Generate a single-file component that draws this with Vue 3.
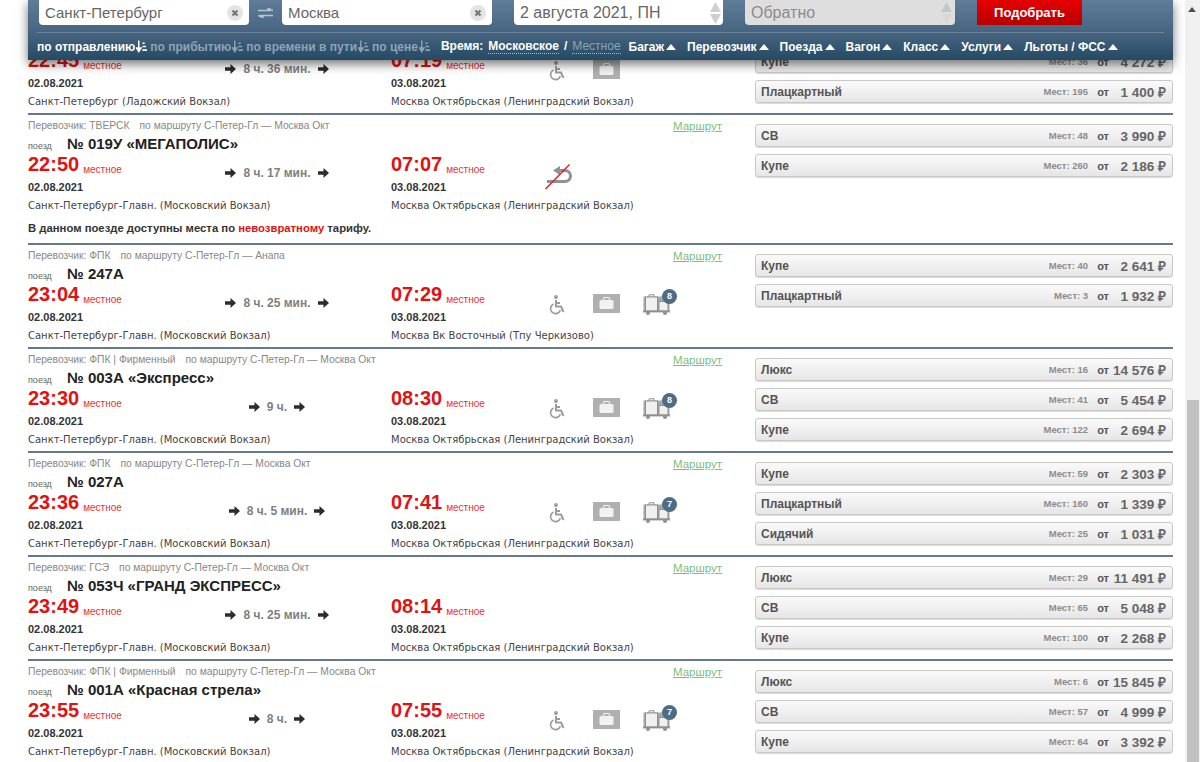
<script setup>
import { ref } from "vue";

const sortItems = [
  { label: "по отправлению", active: true },
  { label: "по прибытию" },
  { label: "по времени в пути" },
  { label: "по цене" },
];

const filters = ["Багаж", "Перевозчик", "Поезда", "Вагон", "Класс", "Услуги", "Льготы / ФСС"];

const SPB_MAIN = "Санкт-Петербург-Главн. (Московский Вокзал)";
const MSK_OKT = "Москва Октябрьская (Ленинградский Вокзал)";

const trains = ref([
  {
    // top of this row is under the search panel
    id: 0,
    duration: "8 ч. 36 мин.",
    depart: "22:45",
    arrive: "07:19",
    from: "Санкт-Петербург (Ладожский Вокзал)",
    to: MSK_OKT,
    wheel: true,
    bag: true,
    tickets: [
      { name: "" },
      { name: "Купе", seats: 36, price: "4 272" },
      { name: "Плацкартный", seats: 195, price: "1 400" },
    ],
  },
  {
    id: 1,
    carrier: "ТВЕРСК",
    route: "С-Петер-Гл — Москва Окт",
    title: "№ 019У «МЕГАПОЛИС»",
    depart: "22:50",
    duration: "8 ч. 17 мин.",
    arrive: "07:07",
    from: SPB_MAIN,
    to: MSK_OKT,
    noReturn: true,
    note: true,
    tickets: [
      { name: "СВ", seats: 48, price: "3 990" },
      { name: "Купе", seats: 260, price: "2 186" },
    ],
  },
  {
    id: 2,
    carrier: "ФПК",
    route: "С-Петер-Гл — Анапа",
    title: "№ 247А",
    depart: "23:04",
    duration: "8 ч. 25 мин.",
    arrive: "07:29",
    from: SPB_MAIN,
    to: "Москва Вк Восточный (Тпу Черкизово)",
    wheel: true,
    bag: true,
    luggage: 8,
    tickets: [
      { name: "Купе", seats: 40, price: "2 641" },
      { name: "Плацкартный", seats: 3, price: "1 932" },
    ],
  },
  {
    id: 3,
    carrier: "ФПК | Фирменный",
    route: "С-Петер-Гл — Москва Окт",
    title: "№ 003А «Экспресс»",
    depart: "23:30",
    duration: "9 ч.",
    arrive: "08:30",
    from: SPB_MAIN,
    to: MSK_OKT,
    wheel: true,
    bag: true,
    luggage: 8,
    tickets: [
      { name: "Люкс", seats: 16, price: "14 576" },
      { name: "СВ", seats: 41, price: "5 454" },
      { name: "Купе", seats: 122, price: "2 694" },
    ],
  },
  {
    id: 4,
    carrier: "ФПК",
    route: "С-Петер-Гл — Москва Окт",
    title: "№ 027А",
    depart: "23:36",
    duration: "8 ч. 5 мин.",
    arrive: "07:41",
    from: SPB_MAIN,
    to: MSK_OKT,
    wheel: true,
    bag: true,
    luggage: 7,
    tickets: [
      { name: "Купе", seats: 59, price: "2 303" },
      { name: "Плацкартный", seats: 160, price: "1 339" },
      { name: "Сидячий", seats: 25, price: "1 031" },
    ],
  },
  {
    id: 5,
    carrier: "ГСЭ",
    route: "С-Петер-Гл — Москва Окт",
    title: "№ 053Ч «ГРАНД ЭКСПРЕСС»",
    depart: "23:49",
    duration: "8 ч. 25 мин.",
    arrive: "08:14",
    from: SPB_MAIN,
    to: MSK_OKT,
    tickets: [
      { name: "Люкс", seats: 29, price: "11 491" },
      { name: "СВ", seats: 65, price: "5 048" },
      { name: "Купе", seats: 100, price: "2 268" },
    ],
  },
  {
    id: 6,
    carrier: "ФПК | Фирменный",
    route: "С-Петер-Гл — Москва Окт",
    title: "№ 001А «Красная стрела»",
    depart: "23:55",
    duration: "8 ч.",
    arrive: "07:55",
    from: SPB_MAIN,
    to: MSK_OKT,
    wheel: true,
    bag: true,
    luggage: 7,
    tickets: [
      { name: "Люкс", seats: 6, price: "15 845" },
      { name: "СВ", seats: 57, price: "4 999" },
      { name: "Купе", seats: 64, price: "3 392" },
    ],
  },
]);
</script>

<template>
  <div class="page">
    <header class="search">
      <div class="search-fields">
        <div class="field city">
          <span>Санкт-Петербург</span>
          <svg width="16" height="16" viewBox="0 0 16 16">
            <circle cx="8" cy="8" r="8" fill="#e4e4e4" />
            <path d="M5.5 5.5l5 5M10.5 5.5l-5 5" stroke="#777" stroke-width="2.2" />
          </svg>
        </div>
        <svg class="swap" width="15" height="10" viewBox="0 0 15 10">
          <path d="M0 2.5H13M15 2.5L10 0.3V2.5M15 7.5H2M0 7.5L5 9.7V7.5" stroke="#b4c4d1" stroke-width="1.4" fill="none" />
        </svg>
        <div class="field city">
          <span>Москва</span>
          <svg width="16" height="16" viewBox="0 0 16 16">
            <circle cx="8" cy="8" r="8" fill="#e4e4e4" />
            <path d="M5.5 5.5l5 5M10.5 5.5l-5 5" stroke="#777" stroke-width="2.2" />
          </svg>
        </div>
        <div class="field date">
          <span>2 августа 2021, ПН</span>
          <svg width="11" height="23" viewBox="0 0 11 23">
            <path d="M5.5 1L11 11H0Z" fill="#cfcfcf" />
            <path d="M5.5 23L0 13H11Z" fill="#cfcfcf" />
          </svg>
        </div>
        <div class="field date back">
          <span>Обратно</span>
          <svg width="11" height="23" viewBox="0 0 11 23">
            <path d="M5.5 1L11 11H0Z" fill="#c6c6c6" />
            <path d="M5.5 23L0 13H11Z" fill="#d8d8d8" />
          </svg>
        </div>
        <button class="submit" type="button">Подобрать</button>
      </div>
      <div class="search-filters">
        <div class="sort">
          <span v-for="item in sortItems" :key="item.label" class="sort-item" :class="{ active: item.active }">
            {{ item.label }}
            <svg width="11" height="13" viewBox="0 0 12 13">
              <path d="M3 0V9M0.5 8L3 12L5.5 8Z" stroke="currentColor" stroke-width="1.6" fill="currentColor" />
              <path d="M7 3H9.5M7 6.5H11M7 10.5H12" stroke="currentColor" stroke-width="1.8" />
            </svg>
          </span>
        </div>
        <div class="time-zone">
          <b>Время:</b>
          <span class="zone on">Московское</span>
          <b>/</b>
          <span class="zone">Местное</span>
        </div>
        <div class="filters">
          <span v-for="name in filters" :key="name" class="filter">{{ name }}<i class="caret"></i></span>
        </div>
      </div>
    </header>

    <main class="list">
      <section v-for="train in trains" :key="train.id" class="train">
        <div class="info">
          <div class="meta">
            <template v-if="train.title">
              <span>Перевозчик: {{ train.carrier }}<em>по маршруту {{ train.route }}</em></span>
              <a class="route-link">Маршрут</a>
            </template>
          </div>
          <div class="title">
            <template v-if="train.title"><small>поезд</small>{{ train.title }}</template>
          </div>
          <div class="schedule">
            <div class="time">{{ train.depart }}<small>местное</small></div>
            <div class="duration">
              <svg width="11" height="10" viewBox="0 0 11 10"><path d="M0 3.2H5.5V0L11 5L5.5 10V6.8H0Z" fill="#2c2c2c" /></svg>
              <span>{{ train.duration }}</span>
              <svg width="11" height="10" viewBox="0 0 11 10"><path d="M0 3.2H5.5V0L11 5L5.5 10V6.8H0Z" fill="#2c2c2c" /></svg>
            </div>
            <div class="time">{{ train.arrive }}<small>местное</small></div>
            <div class="services">
              <svg v-if="train.noReturn" class="no-return" width="28" height="26" viewBox="0 0 28 26">
                <path d="M2 17.5H20A5.5 5.5 0 0 0 20 6.5H13" stroke="#8a939c" stroke-width="3" fill="none" />
                <path d="M8 6.5L15 2V11Z" fill="#8a939c" />
                <path d="M0.5 25L24.5 0.5" stroke="#f01818" stroke-width="1.4" />
              </svg>
              <svg v-if="train.wheel" class="wheel" width="16" height="20" viewBox="0 0 16 20">
                <circle cx="7" cy="2" r="1.9" fill="#9b9b9b" />
                <path d="M7 5V11.5H12L14.5 17M7 8H11" stroke="#9b9b9b" stroke-width="2" fill="none" />
                <path d="M4.6 9A5 5 0 1 0 11.4 15" stroke="#9b9b9b" stroke-width="1.6" fill="none" />
              </svg>
              <svg v-if="train.bag" class="bag" width="27" height="19" viewBox="0 0 27 19">
                <rect width="27" height="19" fill="#b0b0b0" />
                <path d="M10.5 6V4.5Q10.5 3.5 11.5 3.5H15.5Q16.5 3.5 16.5 4.5V6" stroke="#f2f2f2" stroke-width="1.2" fill="none" />
                <rect x="6.5" y="6" width="14" height="9" rx="1.5" fill="#f2f2f2" />
              </svg>
              <span v-if="train.luggage" class="luggage">
                <svg width="27" height="21" viewBox="0 0 27 21">
                  <rect x="0.5" y="2.5" width="26" height="15" fill="#a8a8a8" />
                  <rect x="2.5" y="3" width="12" height="14" fill="#f0f0f0" stroke="#8f8f8f" />
                  <rect x="16" y="7.5" width="9" height="9.5" fill="#f0f0f0" stroke="#8f8f8f" />
                  <path d="M6 3V0.8H11V3" stroke="#8f8f8f" fill="none" />
                  <path d="M0 17.5H27" stroke="#8f8f8f" stroke-width="1.8" />
                  <circle cx="5" cy="19" r="2" fill="#8f8f8f" />
                  <circle cx="22" cy="19" r="2" fill="#8f8f8f" />
                </svg>
                <b class="badge">{{ train.luggage }}</b>
              </span>
            </div>
            <div class="date-line">02.08.2021</div>
            <div class="date-line arrival-date">03.08.2021</div>
            <div class="station">{{ train.from }}</div>
            <div class="station arrival-station">{{ train.to }}</div>
          </div>
          <p v-if="train.note" class="note">
            В данном поезде доступны места по <span>невозвратному</span> тарифу.
          </p>
        </div>

        <div class="tickets">
          <div v-for="ticket in train.tickets" :key="ticket.name" class="ticket">
            <template v-if="ticket.name">
              <span class="ticket-name">{{ ticket.name }}</span>
              <span class="seats">Мест: {{ ticket.seats }}</span>
              <span class="from">от</span>
              <span class="price">{{ ticket.price }} ₽</span>
            </template>
          </div>
        </div>
      </section>
    </main>

    <aside class="scrollbar">
      <i class="scroll-up"></i>
      <div class="thumb"></div>
    </aside>
  </div>
</template>

<style>
html,
body {
  margin: 0;
  background: #fff;
}
</style>

<style scoped>
.page {
  position: relative;
  display: flex;
  width: 1200px;
  height: 762px;
  overflow: hidden;
  background: #fff;
  color: #333;
  font-family: "Liberation Sans", Arial, sans-serif;
}

/* search panel sits over the list */
.search {
  position: absolute;
  top: 0;
  left: 28px;
  z-index: 2;
  width: 1145px;
  height: 60px;
  background: linear-gradient(#5f7d98, #46647f 55%, #254a64);
  box-shadow: 0 4px 10px rgba(0, 0, 0, 0.55);
}
.search-fields {
  display: flex;
  align-items: flex-start;
  box-sizing: border-box;
  height: 33px;
  margin: 0 9px;
  padding-left: 2px;
  border-bottom: 1px solid #6a8298;
}
.field {
  display: flex;
  align-items: center;
  justify-content: space-between;
  box-sizing: border-box;
  width: 210px;
  height: 25px;
  padding: 0 6px;
  background: #fff;
  border-radius: 0 0 4px 4px;
  color: #666;
  font-size: 16px;
}
.city {
  font-size: 15px;
}
.swap {
  margin: 8px 9px 0 9px;
}
.date {
  width: 209px;
  margin-left: 22px;
  padding-right: 2px;
}
.date.back {
  width: 210px;
  padding-right: 3px;
  background: #dedede;
  color: #8b8b8b;
}
.submit {
  width: 105px;
  height: 25px;
  margin-left: 22px;
  border: 0;
  background: linear-gradient(#e60000, #b80000);
  color: #fff;
  font: bold 13px "Liberation Sans", Arial, sans-serif;
}
.search-filters {
  display: flex;
  align-items: center;
  height: 27px;
  padding-left: 9px;
  color: #fff;
  font-size: 12px;
  font-weight: bold;
  white-space: nowrap;
}
.sort {
  display: flex;
  gap: 3px;
}
.sort-item {
  display: flex;
  align-items: center;
  gap: 1px;
  color: #8ea3b5;
}
.sort-item.active {
  color: #fff;
}
.time-zone {
  display: flex;
  align-items: baseline;
  gap: 5px;
  margin-left: 11px;
}
.zone {
  color: #8ea3b5;
  font-weight: normal;
  border-bottom: 1px dotted #a9bac8;
}
.zone.on {
  color: #fff;
  font-weight: bold;
}
.filters {
  display: flex;
  gap: 11px;
  margin-left: 8px;
}
.filter {
  display: flex;
  align-items: center;
  gap: 2px;
}
.caret {
  width: 0;
  height: 0;
  border: 5.5px solid transparent;
  border-top: 0;
  border-bottom: 6px solid #fff;
}

.list {
  flex: 1;
  box-sizing: border-box;
  min-width: 0;
  padding: 9px 12px 0 28px;
}
.train {
  display: flex;
  box-sizing: border-box;
  min-height: 104px;
  border-top: 2px solid #64798c;
}
.info {
  flex-shrink: 0;
  width: 727px;
}
.meta {
  display: flex;
  justify-content: space-between;
  box-sizing: border-box;
  height: 21px;
  padding: 1px 33px 0 0;
  color: #888;
  font-size: 10.3px;
  line-height: 20px;
}
.meta em {
  margin-left: 10px;
  font-style: normal;
}
.route-link {
  color: #79c079;
  font-size: 11.5px;
  text-decoration: underline;
}
.title {
  display: flex;
  align-items: baseline;
  height: 15px;
  color: #222;
  font-size: 15px;
  font-weight: bold;
  line-height: 15px;
}
.title small {
  width: 39px;
  color: #666;
  font-size: 9px;
  font-weight: normal;
}
.schedule {
  display: grid;
  grid-template-columns: 170px 193px 157px 1fr;
  grid-template-rows: 27px 18px 20px;
}
.time {
  color: #e01212;
  font-size: 20px;
  font-weight: bold;
  line-height: 26px;
  white-space: nowrap;
}
.time small {
  margin-left: 4px;
  color: #ee3030;
  font-size: 10px;
  font-weight: normal;
  vertical-align: -2px;
}
.duration {
  display: flex;
  align-items: center;
  justify-content: center;
  gap: 7px;
  width: 158px;
  height: 10px;
  padding-top: 17px;
  color: #808080;
  font-size: 12px;
  font-weight: bold;
}
.services {
  grid-column: 4;
  grid-row: 1 / span 2;
  display: flex;
  align-items: flex-start;
  padding-top: 13px;
}
.no-return {
  margin-left: -3px;
}
.wheel {
  margin: 1px 28px 0 1px;
}
.bag {
  margin-right: 23px;
}
.luggage {
  position: relative;
  display: block;
  height: 21px;
}
.badge {
  position: absolute;
  top: -5px;
  right: -7px;
  width: 15px;
  height: 15px;
  border-radius: 50%;
  background: #4f6c87;
  color: #fff;
  font-size: 9px;
  line-height: 15px;
  text-align: center;
}
.date-line {
  grid-row: 2;
  color: #333;
  font-size: 11px;
  font-weight: bold;
  line-height: 18px;
}
.arrival-date {
  grid-column: 3;
}
.station {
  grid-row: 3;
  grid-column: 1 / span 2;
  color: #444;
  font-family: "DejaVu Sans", Verdana, sans-serif;
  font-size: 10px;
  line-height: 20px;
  white-space: nowrap;
}
.arrival-station {
  grid-column: 3 / span 2;
}
.note {
  margin: 0;
  padding-bottom: 3px;
  color: #333;
  font-size: 11.3px;
  font-weight: bold;
  line-height: 24px;
}
.note span {
  color: #e01212;
}
.tickets {
  flex: 1;
  display: flex;
  flex-direction: column;
  gap: 7px;
  padding-top: 9px;
}
.ticket {
  display: flex;
  align-items: center;
  box-sizing: border-box;
  height: 23px;
  padding: 0 6px 0 5px;
  border: 1px solid #c8c8c8;
  border-radius: 3px;
  background: linear-gradient(#fafafa, #e6e6e6);
  box-shadow: 0 1px 1px rgba(0, 0, 0, 0.15);
}
.ticket-name {
  flex: 1;
  color: #555;
  font-size: 12px;
  font-weight: bold;
}
.seats {
  color: #8c8c8c;
  font-size: 9.5px;
  font-weight: bold;
}
.from {
  margin-left: 9px;
  color: #555;
  font-size: 11px;
  font-weight: bold;
}
.price {
  width: 57px;
  color: #666;
  font-size: 13.5px;
  font-weight: bold;
  text-align: right;
}

.scrollbar {
  display: flex;
  flex-direction: column;
  flex-shrink: 0;
  width: 15px;
  background: #f1f1f1;
}
.scroll-up {
  width: 0;
  height: 0;
  margin: 7px 0 0 3px;
  border: 4px solid transparent;
  border-top: 0;
  border-bottom: 5px solid #505050;
}
.thumb {
  width: 12px;
  height: 362px;
  margin: auto 1px 0 2px;
  background: #c1c1c1;
}
</style>
